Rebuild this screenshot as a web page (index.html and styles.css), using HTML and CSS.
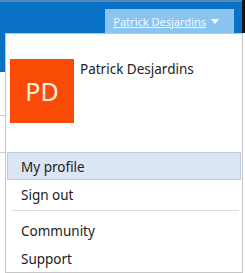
FILE: index.html
```html
<!DOCTYPE html>
<html lang="en">
<head>
    <meta charset="UTF-8">
    <title>Account menu</title>
    <link rel="stylesheet" href="styles.css">
</head>
<body>
    <!-- Page behind the menu -->
    <div class="page">
        <header class="topbar">
            <div class="topbar-main">
                <div class="user-button">
                    <a class="user-name" href="#">Patrick Desjardins</a>
                    <span class="caret"></span>
                </div>
            </div>
            <div class="topbar-edge"></div>
        </header>
        <div class="side">
            <div class="side-blue"></div>
            <div class="side-row"></div>
            <div class="side-row"></div>
        </div>
    </div>

    <!-- Account dropdown -->
    <div class="dropdown">
        <div class="profile">
            <div class="avatar">PD</div>
            <div class="profile-name">Patrick Desjardins</div>
        </div>
        <ul class="menu">
            <li class="menu-item active">My profile</li>
            <li class="menu-item">Sign out</li>
        </ul>
        <div class="separator"></div>
        <ul class="menu">
            <li class="menu-item">Community</li>
            <li class="menu-item">Support</li>
        </ul>
    </div>
</body>
</html>
```

FILE: styles.css
```css
body {
    margin: 0;
    width: 245px;
    height: 273px;
    overflow: hidden;
    position: relative;
    background-color: #fff;
    font-family: "Segoe UI", "Noto Sans", sans-serif;
}
.topbar {
    display: flex;
    height: 33px;
}
.topbar-main {
    flex: 1;
    display: flex;
    align-items: flex-end;
    justify-content: flex-end;
    background-color: #0a72c6;
    border-top: 2px solid #5587bc;
    padding-right: 8px;
}
.user-button {
    display: flex;
    align-items: center;
    height: 24px;
    padding: 0 15px 0 8px;
    background-color: #8ac5ef;
}
.user-name {
    color: #f4f9ff;
    font-size: 11px;
    text-decoration: underline;
}
.caret {
    width: 0;
    height: 0;
    margin-left: 5px;
    border-left: 4px solid transparent;
    border-right: 4px solid transparent;
    border-top: 5px solid #fff;
}
.topbar-edge {
    width: 3px;
    background-color: #141414;
}
.side {
    width: 5px;
}
.side-blue {
    height: 39px;
    background-color: #0a72c6;
}
.side-row {
    height: 43px;
    border-bottom: 1px solid #cfcfcf;
}
.side-row + .side-row {
    height: 36px;
}
/* The menu lies over the page */
.dropdown {
    position: absolute;
    top: 33px;
    left: 5px;
    width: 236px;
    height: 238px;
    background-color: #fff;
    border: 1px solid #c6c6c6;
}
.profile {
    display: flex;
    padding: 25px 0 0 4px;
    height: 93px;
    box-sizing: border-box;
}
.avatar {
    width: 64px;
    height: 64px;
    background-color: #fa4b06;
    color: #ffeee0;
    font-size: 25px;
    display: flex;
    align-items: center;
    justify-content: center;
}
.profile-name {
    margin-left: 6px;
    margin-top: 1px;
    font-size: 13.5px;
    color: #222;
}
.menu {
    list-style: none;
    margin: 0;
    padding: 0 1px;
}
.profile + .menu {
    margin-top: 25px;
}
.menu-item {
    height: 28px;
    line-height: 28px;
    padding-left: 13px;
    font-size: 13.5px;
    color: #222;
    border: 1px solid transparent;
    box-sizing: border-box;
}
.menu-item.active {
    background-color: #dbe5f3;
    border-color: #bccbe2;
}
.separator {
    height: 1px;
    margin: 2px 3px 5px 6px;
    background-color: #dcdcdc;
}
```
